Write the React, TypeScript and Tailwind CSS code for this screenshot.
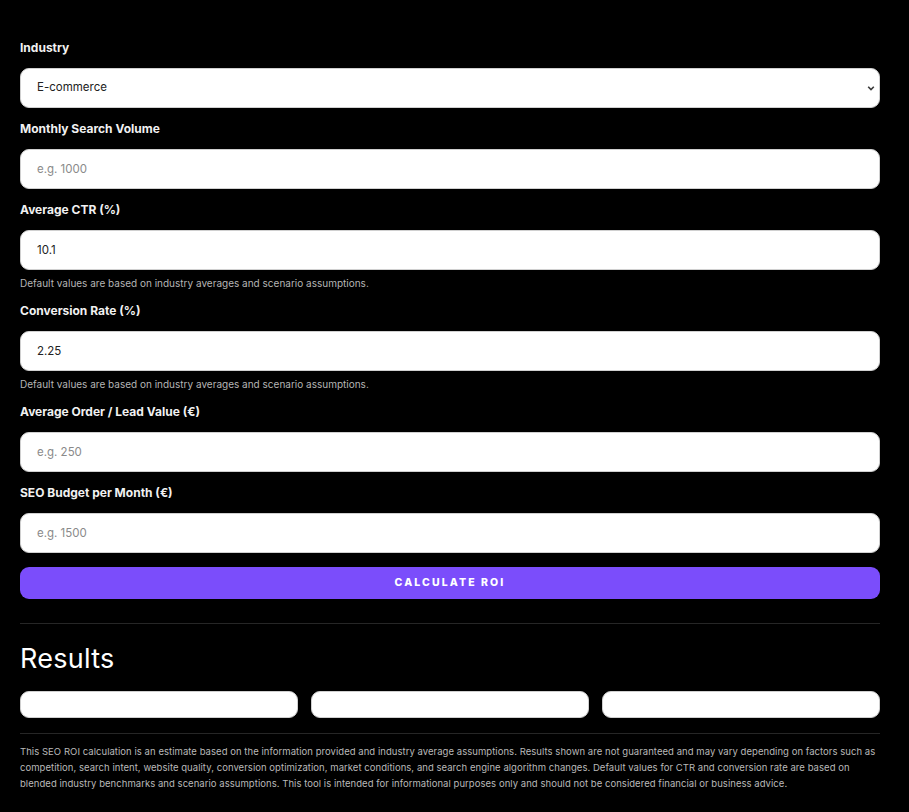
import React from 'react';

const Label = ({ children }: { children: React.ReactNode }) => (
  <label className="block text-[12px] leading-[18px] font-bold text-[#f1f1f1] mb-[11px]">
    {children}
  </label>
);

const Help = () => (
  <p className="mt-[7px] text-[10px] leading-[13px] text-[#b5b5b5]">
    Default values are based on industry averages and scenario assumptions.
  </p>
);

const inputCls =
  'block w-full h-10 rounded-[9px] border border-[#d0d0d0] bg-white px-4 text-[11.5px] text-[#222] placeholder:text-[#8a8a8a] outline-none';

const App = () => {
  return (
    <div className="min-h-[812px] bg-black pl-5 pt-[39px] pb-6 font-['Inter',sans-serif]">
      <div className="w-[860px]">
        <form className="flex flex-col gap-3" onSubmit={(e) => e.preventDefault()}>
          <div>
            <Label>Industry</Label>
            <div className="relative">
              <select className={inputCls + ' appearance-none'} defaultValue="ecommerce">
                <option value="ecommerce">E-commerce</option>
                <option value="saas">SaaS</option>
                <option value="local">Local Services</option>
              </select>
              <svg
                className="absolute right-[5px] top-1/2 -translate-y-1/2 w-[8px] h-[8px] pointer-events-none"
                viewBox="0 0 10 10"
              >
                <path d="M1.5 3.5 L5 7 L8.5 3.5" fill="none" stroke="#3a3a3a" strokeWidth="2" />
              </svg>
            </div>
          </div>

          <div>
            <Label>Monthly Search Volume</Label>
            <input className={inputCls} placeholder="e.g. 1000" />
          </div>

          <div>
            <Label>Average CTR (%)</Label>
            <input className={inputCls} defaultValue="10.1" />
            <Help />
          </div>

          <div>
            <Label>Conversion Rate (%)</Label>
            <input className={inputCls} defaultValue="2.25" />
            <Help />
          </div>

          <div>
            <Label>Average Order / Lead Value (€)</Label>
            <input className={inputCls} placeholder="e.g. 250" />
          </div>

          <div>
            <Label>SEO Budget per Month (€)</Label>
            <input className={inputCls} placeholder="e.g. 1500" />
          </div>

          <button
            type="submit"
            className="mt-[2px] h-8 w-full rounded-[9px] bg-[#7b4dfb] text-[10.5px] font-extrabold tracking-[0.2em] text-white"
          >
            CALCULATE ROI
          </button>
        </form>

        <div className="mt-6 border-t border-[#262626]" />

        <h2 className="mt-[19px] text-[27px] leading-8 font-normal tracking-[0.01em] text-white">Results</h2>

        <div className="mt-4 grid grid-cols-3 gap-[13px]">
          <div className="h-[27px] rounded-[9px] border border-[#cfcfcf] bg-white" />
          <div className="h-[27px] rounded-[9px] border border-[#cfcfcf] bg-white" />
          <div className="h-[27px] rounded-[9px] border border-[#cfcfcf] bg-white" />
        </div>

        <div className="mt-[15px] border-t border-[#262626]" />

        <p className="mt-[10px] text-[9.5px] leading-4 text-[#b9b9b9] tracking-[0.005em]">
          This SEO ROI calculation is an estimate based on the information provided and industry average
          assumptions. Results shown are not guaranteed and may vary depending on factors such as competition,
          search intent, website quality, conversion optimization, market conditions, and search engine algorithm
          changes. Default values for CTR and conversion rate are based on blended industry benchmarks and
          scenario assumptions. This tool is intended for informational purposes only and should not be
          considered financial or business advice.
        </p>
      </div>
    </div>
  );
};

export default App;
